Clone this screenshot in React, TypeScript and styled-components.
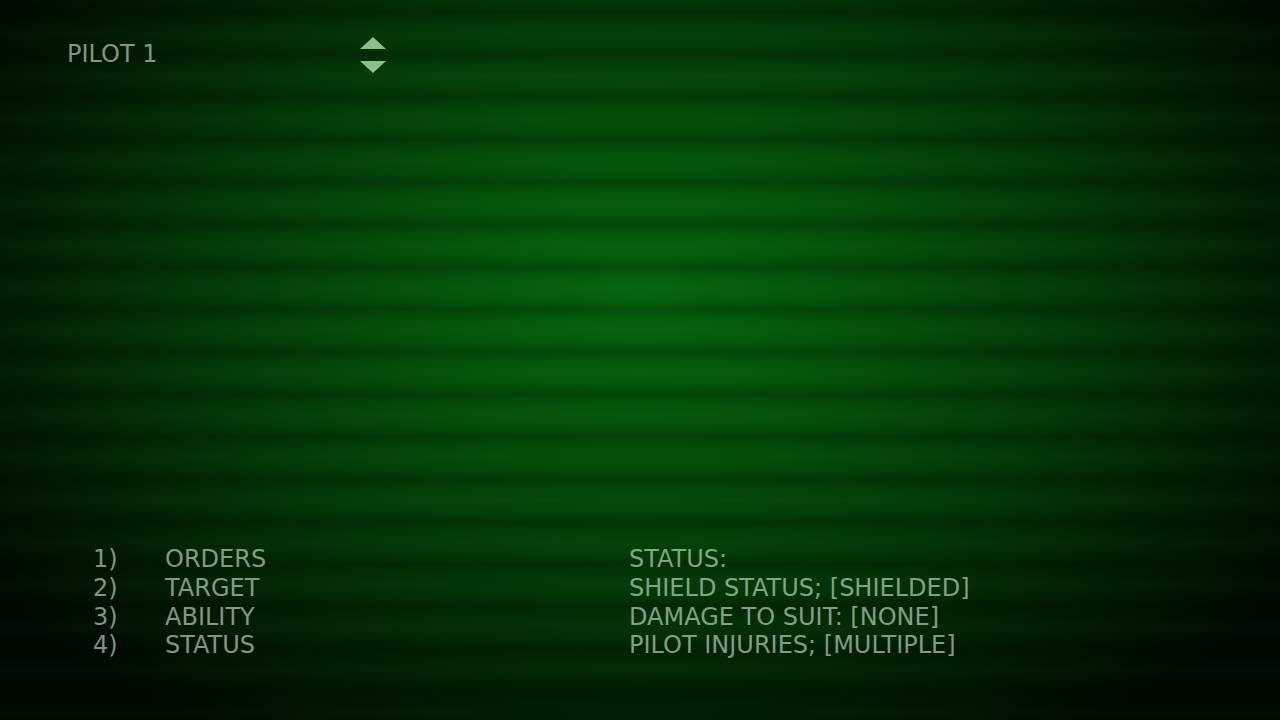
import styled, { createGlobalStyle } from 'styled-components';

const GlobalStyle = createGlobalStyle`
  html, body {
    margin: 0;
    padding: 0;
    background: #000;
  }
  body {
    font-family: 'DejaVu Sans', 'Noto Sans', sans-serif;
  }
`;

const orders = ['ORDERS', 'TARGET', 'ABILITY', 'STATUS'];
const statusLines = [
  'STATUS:',
  'SHIELD STATUS; [SHIELDED]',
  'DAMAGE TO SUIT: [NONE]',
  'PILOT INJURIES; [MULTIPLE]',
];

const App = () => {
  return (
    <>
      <GlobalStyle />
      <Screen>
        <Header>
          <PilotName>PILOT 1</PilotName>
          <Spinner>
            <Arrow $dir="up" />
            <Arrow $dir="down" />
          </Spinner>
        </Header>

        <Console>
          <Menu>
            {orders.map((item, i) => (
              <MenuRow key={item}>
                <Num>{i + 1})</Num>
                <span>{item}</span>
              </MenuRow>
            ))}
          </Menu>
          <StatusBlock>
            {statusLines.map(line => (
              <Line key={line}>{line}</Line>
            ))}
          </StatusBlock>
        </Console>
      </Screen>
    </>
  );
};

export default App;

const textColor = 'rgba(225, 255, 225, 0.56)';

const Screen = styled.div`
  position: relative;
  width: 1280px;
  height: 720px;
  overflow: hidden;
  display: flex;
  flex-direction: column;
  justify-content: space-between;
  box-sizing: border-box;
  padding: 35px 0 60px;
  color: ${textColor};
  font-size: 24px;
  background:
    repeating-linear-gradient(
      to bottom,
      rgba(0, 0, 0, 0) 0px,
      rgba(0, 0, 0, 0.2) 11px,
      rgba(0, 0, 0, 0) 22px,
      rgba(255, 255, 255, 0.015) 32px,
      rgba(0, 0, 0, 0) 42.5px
    ),
    radial-gradient(
      ellipse 62% 72% at 50% 41%,
      #04640c 0%,
      #034f09 30%,
      #023506 58%,
      #011a02 82%,
      #000800 100%
    );
  background-position: 0 1px, 0 0;
`;

const Header = styled.div`
  display: flex;
  align-items: center;
  padding-left: 67px;
  line-height: 28px;
`;

const PilotName = styled.div`
  width: 293px;
`;

const Spinner = styled.div`
  display: flex;
  flex-direction: column;
  gap: 12px;
  margin-top: 2px;
`;

const Arrow = styled.div<{ $dir: 'up' | 'down' }>`
  width: 0;
  height: 0;
  border-left: 13px solid transparent;
  border-right: 13px solid transparent;
  ${props =>
    props.$dir === 'up'
      ? 'border-bottom: 12px solid #8dbf8a;'
      : 'border-top: 12px solid #8dbf8a;'}
`;

const Console = styled.div`
  display: grid;
  grid-template-columns: 536px 1fr;
  padding-left: 93px;
  line-height: 28.7px;
`;

const Menu = styled.div`
  display: flex;
  flex-direction: column;
`;

const MenuRow = styled.div`
  display: flex;
`;

const Num = styled.span`
  width: 72px;
`;

const StatusBlock = styled.div`
  display: flex;
  flex-direction: column;
`;

const Line = styled.div`
  white-space: nowrap;
`;
